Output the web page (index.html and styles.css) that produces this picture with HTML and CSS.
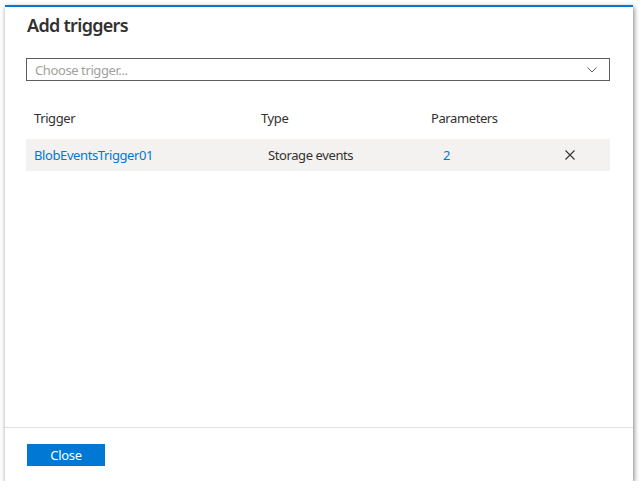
FILE: index.html
```html
<!DOCTYPE html>
<html>
<head>
<meta charset="utf-8">
<link rel="stylesheet" href="styles.css">
</head>
<body>
<div class="dialog">
  <div class="main">
    <h1 class="title">Add triggers</h1>
    <div class="select">
      <span class="placeholder">Choose trigger...</span>
      <svg class="chev" width="10" height="6" viewBox="0 0 10 6"><path d="M0.5 0.5 L5 5 L9.5 0.5" fill="none" stroke="#605e5c" stroke-width="1"/></svg>
    </div>
    <div class="table">
      <div class="thead">
        <div class="th c1">Trigger</div>
        <div class="th c2">Type</div>
        <div class="th c3">Parameters</div>
        <div class="th c4"></div>
      </div>
      <div class="row">
        <div class="td c1"><a class="link">BlobEventsTrigger01</a></div>
        <div class="td c2 type">Storage events</div>
        <div class="td c3 params"><a class="link">2</a></div>
        <div class="td c4">
          <svg width="10" height="10" viewBox="0 0 10 10"><path d="M0.5 0.5 L9.5 9.5 M9.5 0.5 L0.5 9.5" stroke="#323130" stroke-width="1.1" fill="none"/></svg>
        </div>
      </div>
    </div>
  </div>
  <div class="footer">
    <button class="btn">Close</button>
  </div>
</div>
</body>
</html>
```
FILE: styles.css
```css
html, body {
  margin: 0;
  padding: 0;
  background: #ffffff;
}
body {
  padding: 5px 0 0 5px;
  font-family: "Noto Sans", "Open Sans", sans-serif;
  font-size: 13px;
  letter-spacing: -0.4px;
  color: #323130;
}
.dialog {
  width: 628px;
  height: 474px;
  border-top: 2px solid #0078d4;
  background: #fff;
  box-shadow: 1px 2px 5px rgba(0,0,0,0.5);
  display: flex;
  flex-direction: column;
}
.main {
  flex: 1;
  padding: 0 23px 0 21px;
}
.title {
  margin: 0;
  padding-top: 4px;
  height: 28px;
  line-height: 28px;
  font-size: 18px;
  font-weight: 600;
  color: #323130;
  padding-left: 1px;
  letter-spacing: -0.7px;
}
.select {
  margin-top: 19px;
  height: 21px;
  border: 1px solid #605e5c;
  display: flex;
  align-items: center;
  justify-content: space-between;
  padding: 0 12px 0 8px;
}
.placeholder {
  color: #a19f9d;
  font-size: 13px;
}
.chev {
  display: block;
}
.table {
  margin-top: 20px;
}
.thead, .row {
  display: grid;
  grid-template-columns: 227px 170px 120px 1fr;
  align-items: center;
}
.thead {
  height: 38px;
  padding-bottom: 5px;
  box-sizing: border-box;
}
.row {
  height: 32px;
  background: #f3f2f1;
}
.th, .td {
  padding-left: 8px;
  white-space: nowrap;
}
.type {
  padding-left: 15px;
}
.params {
  padding-left: 20px;
}
.c4 {
  padding-left: 22px;
  display: flex;
  align-items: center;
}
.c4 svg {
  display: block;
}
.link {
  color: #0078d4;
  text-decoration: none;
}
.footer {
  border-top: 1px solid #e1dfdd;
  height: 54px;
  padding: 16px 0 0 22px;
  box-sizing: border-box;
}
.btn {
  width: 78px;
  height: 22px;
  border: none;
  background: #0078d4;
  color: #fff;
  font-family: "Noto Sans", "Open Sans", sans-serif;
  font-size: 13px;
  letter-spacing: -0.3px;
  padding: 0;
  display: block;
}
```
